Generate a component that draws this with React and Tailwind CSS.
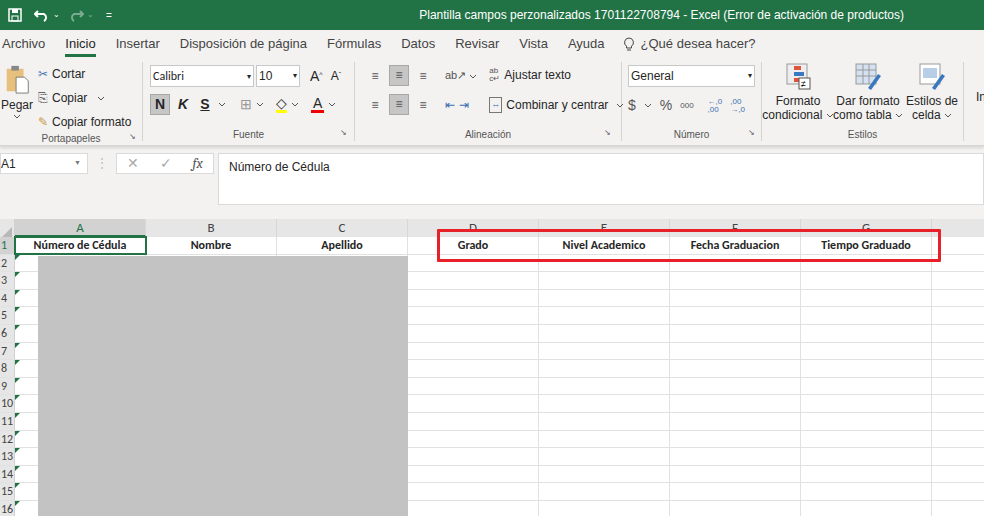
import React from "react";

const F = { fontFamily: '"Liberation Sans",Arial,sans-serif' };
const C = { fontFamily: 'Carlito,"Liberation Sans",sans-serif' };

function Chev() {
  return <svg width="8" height="5" viewBox="0 0 8 5" className="inline-block"><path d="M1 1l3 3 3-3" stroke="#555" fill="none" strokeWidth="1"/></svg>;
}

const cols = ["A", "B", "C", "D", "E", "F", "G", ""];
const row1 = ["Número de Cédula", "Nombre", "Apellido", "Grado", "Nivel Academico", "Fecha Graduacion", "Tiempo Graduado", ""];

export default function App() {
  return (
    <div className="w-[984px] h-[516px] overflow-hidden bg-[#f3f2f1] relative text-[#262626] whitespace-nowrap" style={F}>
      {/* title bar */}
      <div className="h-[30px] bg-[#217346] flex items-center text-white text-[12px] px-[8px]">
        <svg width="14" height="14" viewBox="0 0 14 14"><rect x="1" y="1" width="12" height="12" fill="none" stroke="white" strokeWidth="1.5"/><rect x="4" y="1" width="6" height="4" fill="white"/><rect x="4" y="8" width="6" height="5" fill="none" stroke="white"/></svg>
        <svg className="ml-[12px]" width="16" height="14" viewBox="0 0 16 14"><path d="M4 3 L1 6 L4 9 M1 6 H10 a4 4 0 0 1 0 7" stroke="white" strokeWidth="2" fill="none"/></svg>
        <span className="ml-[3px] text-[8px]">⌄</span>
        <svg className="ml-[8px] opacity-40" width="16" height="14" viewBox="0 0 16 14"><path d="M12 3 L15 6 L12 9 M15 6 H6 a4 4 0 0 0 0 7" stroke="white" strokeWidth="2" fill="none"/></svg>
        <span className="ml-[3px] text-[8px] opacity-40">⌄</span>
        <span className="ml-[12px] text-[10px]">=</span>
        <div className="ml-auto mr-[72px]">Plantilla campos perzonalizados 1701122708794  -  Excel (Error de activación de productos)</div>
      </div>
      {/* tabs */}
      <div className="h-[28px] flex items-center text-[13px] text-[#444]">
        {["Archivo", "Inicio", "Insertar", "Disposición de página", "Fórmulas", "Datos", "Revisar", "Vista", "Ayuda"].map((t) => (
          <div key={t} className="px-[10px] first:pl-[2px] h-full flex items-center relative">
            <span className={t === "Inicio" ? "text-[#262626]" : ""}>{t}</span>
            {t === "Inicio" && <div className="absolute bottom-[1px] left-[10px] right-[10px] h-[3px] bg-[#217346]" />}
          </div>
        ))}
        <div className="px-[8px] flex items-center gap-[6px]">
          <svg width="12" height="15" viewBox="0 0 12 15"><path d="M6 1a4.5 4.5 0 0 0-2.5 8.2V11h5V9.2A4.5 4.5 0 0 0 6 1zM4 13h4" stroke="#444" fill="none"/></svg>
          ¿Qué desea hacer?
        </div>
      </div>
      {/* ribbon */}
      <div className="h-[88px] flex text-[12px] border-b border-[#d6d6d6] shadow-[0_2px_3px_rgba(0,0,0,0.12)]">
        {/* Portapapeles */}
        <div className="w-[143px] shrink-0 border-r border-[#d4d4d4] my-[4px] flex flex-col">
          <div className="flex flex-1">
            <div className="w-[34px] flex flex-col items-center pt-[2px]">
              <svg width="28" height="30" viewBox="0 0 28 32"><rect x="3" y="5" width="18" height="24" rx="1" fill="#e8c07d"/><rect x="8" y="2" width="8" height="5" fill="#888"/><path d="M13 14h9l4 4v13H13z" fill="white" stroke="#777"/></svg>
              <span className="text-[12px] mt-[2px]">Pegar</span>
              <Chev />
            </div>
            <div className="flex flex-col gap-[6px] pt-[3px] text-[12px] ml-[4px]">
              <div className="flex items-center gap-[4px]"><span className="text-[#3a6fb0]">✂</span>Cortar</div>
              <div className="flex items-center gap-[4px]"><span className="text-[#666]">⎘</span>Copiar <span className="ml-[6px]"><Chev /></span></div>
              <div className="flex items-center gap-[4px]"><span className="text-[#c8943c]">✎</span>Copiar formato</div>
            </div>
          </div>
          <div className="text-[10px] text-[#555] text-center h-[14px] relative">Portapapeles<span className="absolute right-[6px] text-[8px]">↘</span></div>
        </div>
        {/* Fuente */}
        <div className="w-[212px] shrink-0 border-r border-[#d4d4d4] my-[4px] flex flex-col px-[7px]">
          <div className="flex items-center gap-[2px] mt-[3px]">
            <div className="w-[104px] h-[22px] bg-white border border-[#c8c8c8] flex items-center px-[2px] justify-between" style={C}>Calibri<span className="text-[8px]">▾</span></div>
            <div className="w-[44px] h-[22px] bg-white border border-[#c8c8c8] flex items-center px-[2px] justify-between">10<span className="text-[8px]">▾</span></div>
            <span className="ml-[8px] text-[14px]">A<sup className="text-[7px]">^</sup></span>
            <span className="ml-[6px] text-[12px]">A<sup className="text-[7px]">ˇ</sup></span>
          </div>
          <div className="flex items-center gap-[4px] mt-[7px] text-[14px]">
            <div className="w-[20px] h-[21px] bg-[#c6c6c6] border border-[#a8a8a8] flex items-center justify-center font-bold">N</div>
            <span className="italic font-bold w-[18px] text-center">K</span>
            <span className="underline font-bold w-[18px] text-center">S</span>
            <Chev />
            <span className="ml-[10px] text-[#999]">⊞</span><Chev />
            <span className="ml-[8px] border-b-[3px] border-[#ffff00] leading-[14px]">◇</span><Chev />
            <span className="ml-[8px] border-b-[3px] border-[#e00] leading-[14px] px-[2px]">A</span><Chev />
          </div>
          <div className="mt-auto text-[10px] text-[#555] text-center h-[14px] relative">Fuente<span className="absolute right-0 text-[8px]">↘</span></div>
        </div>
        {/* Alineacion */}
        <div className="w-[267px] shrink-0 border-r border-[#d4d4d4] my-[4px] flex flex-col px-[10px]">
          <div className="flex gap-[12px] mt-[3px] flex-1">
            <div className="flex flex-col gap-[8px]">
              <div className="flex items-center gap-[4px] text-[#555]">
                <span className="w-[20px] text-center">≡</span>
                <span className="w-[20px] h-[21px] bg-[#c6c6c6] border border-[#a8a8a8] text-center">≡</span>
                <span className="w-[20px] text-center">≡</span>
                <span className="ml-[8px] text-[11px]">ab↗ <Chev /></span>
              </div>
              <div className="flex items-center gap-[4px] text-[#555]">
                <span className="w-[20px] text-center">≡</span>
                <span className="w-[20px] h-[21px] bg-[#c6c6c6] border border-[#a8a8a8] text-center">≡</span>
                <span className="w-[20px] text-center">≡</span>
                <span className="ml-[8px] text-[#3a6fb0]">⇤</span>
                <span className="text-[#3a6fb0]">⇥</span>
              </div>
            </div>
            <div className="flex flex-col gap-[12px] pt-[1px]">
              <div className="flex items-center gap-[4px]"><span className="text-[8px] leading-[8px] text-[#555]">ab<br/>c↵</span>Ajustar texto</div>
              <div className="flex items-center gap-[4px]"><span className="text-[#3a6fb0] border border-[#777] px-[1px] text-[9px]">↔</span>Combinar y centrar <span className="ml-[4px]"><Chev /></span></div>
            </div>
          </div>
          <div className="text-[10px] text-[#555] text-center h-[14px] relative">Alineación<span className="absolute right-0 text-[8px]">↘</span></div>
        </div>
        {/* Numero */}
        <div className="w-[140px] shrink-0 border-r border-[#d4d4d4] my-[4px] flex flex-col px-[6px]">
          <div className="w-[127px] h-[22px] mt-[3px] bg-white border border-[#c8c8c8] flex items-center px-[2px] justify-between">General<span className="text-[8px]">▾</span></div>
          <div className="flex items-center gap-[8px] mt-[8px] text-[#555]">
            <span className="text-[14px]">$</span><Chev /><span className="text-[14px]">%</span><span className="text-[8px]">000</span>
            <span className="text-[8px] leading-[8px] text-[#3a6fb0] ml-[6px]">←,0<br/>,00</span>
            <span className="text-[8px] leading-[8px] text-[#3a6fb0]">,00<br/>→,0</span>
          </div>
          <div className="mt-auto text-[10px] text-[#555] text-center h-[14px] relative">Número<span className="absolute right-0 text-[8px]">↘</span></div>
        </div>
        {/* Estilos */}
        <div className="w-[202px] shrink-0 border-r border-[#d4d4d4] my-[4px] flex flex-col">
          <div className="flex flex-1 text-[12px] leading-[14px] text-center">
            <div className="w-[72px] flex flex-col items-center">
              <svg width="26" height="28" viewBox="0 0 26 28"><rect x="2" y="2" width="20" height="20" fill="#eee" stroke="#999"/><rect x="9" y="4" width="7" height="4" fill="#e0533a"/><rect x="9" y="10" width="10" height="4" fill="#3a78c0"/><rect x="9" y="16" width="5" height="4" fill="#e0533a"/><rect x="14" y="16" width="11" height="11" fill="white" stroke="#555"/><text x="16" y="25" fontSize="9">≠</text></svg>
              <span className="mt-[4px]">Formato<br/>condicional <Chev /></span>
            </div>
            <div className="w-[68px] flex flex-col items-center">
              <svg width="28" height="28" viewBox="0 0 28 28"><rect x="2" y="2" width="20" height="20" fill="#d4e1f0" stroke="#999"/><path d="M2 8h20M2 14h20M9 2v20M15 2v20" stroke="#999"/><path d="M14 26l10-14 3 2-10 14z" fill="#3a78c0"/></svg>
              <span className="mt-[4px]">Dar formato<br/>como tabla <Chev /></span>
            </div>
            <div className="w-[60px] flex flex-col items-center">
              <svg width="28" height="28" viewBox="0 0 28 28"><rect x="2" y="2" width="20" height="20" fill="white" stroke="#999"/><rect x="5" y="6" width="14" height="10" fill="#b8cde6"/><path d="M14 26l10-14 3 2-10 14z" fill="#3a78c0"/></svg>
              <span className="mt-[4px]">Estilos de<br/>celda <Chev /></span>
            </div>
          </div>
          <div className="text-[10px] text-[#555] text-center h-[14px]">Estilos</div>
        </div>
        <div className="pl-[12px] pt-[30px] text-[12px]">In</div>
      </div>
      {/* formula bar */}
      <div className="flex items-start mt-[7px] h-[52px] text-[12px]">
        <div className="w-[88px] h-[21px] bg-white border border-[#dadada] flex items-center justify-between pr-[6px]">A1<span className="text-[7px] text-[#777]">▼</span></div>
        <span className="mx-[8px] text-[#bbb] leading-[21px]">⋮</span>
        <div className="w-[98px] h-[21px] bg-white border border-[#dadada] flex items-center justify-around text-[#aaa] text-[14px]">
          <span>✕</span><span>✓</span><span className="italic text-[#555] font-serif">fx</span>
        </div>
        <div className="ml-[4px] flex-1 h-[52px] bg-white border border-[#dadada] pl-[10px] pt-[4px]">Número de Cédula</div>
      </div>
      {/* grid */}
      <div className="mt-[14px] bg-white" style={C}>
        <div className="flex h-[18px] bg-[#e6e6e6] text-[#444] text-[13px]">
          <div className="w-[15px] shrink-0 border-r border-[#d0d0d0] flex items-end"><svg width="12" height="12" viewBox="0 0 12 12"><path d="M12 2v10H2z" fill="#b8b8b8"/></svg></div>
          {cols.map((c, i) => (
            <div key={i} className={"w-[131px] shrink-0 border-r border-[#d8d8d8] text-center leading-[18px] " + (i === 0 ? "bg-[#d2d2d2] text-[#217346] border-b-2 border-b-[#217346]" : "")}>{c}</div>
          ))}
        </div>
        {Array.from({ length: 16 }).map((_, r) => (
          <div key={r} className="flex h-[17.6px] border-b border-[#e1e1e1]">
            <div className={"w-[15px] shrink-0 text-[12px] leading-[17px] border-r border-[#d0d0d0] overflow-hidden pl-[1px] " + (r === 0 ? "bg-[#d2d2d2] text-[#217346]" : "bg-[#e6e6e6] text-[#444]")}>
              {r + 1}
            </div>
            {row1.map((t, i) => (
              <div key={i} className={"w-[131px] shrink-0 border-r border-[#e1e1e1] text-center font-bold text-[12px] leading-[17px] relative " + (r === 0 && i === 0 ? "outline outline-2 outline-[#217346] -outline-offset-1 z-10" : "")}>
                {r === 0 ? t : ""}
                {r > 0 && i === 0 && <div className="absolute top-0 left-0 w-0 h-0 border-t-[5px] border-t-[#217346] border-r-[5px] border-r-transparent" />}
              </div>
            ))}
          </div>
        ))}
      </div>
      {/* overlays */}
      <div className="absolute left-[38px] top-[256px] w-[370px] h-[260px] bg-[#c3c3c3]" />
      <div className="absolute left-[437px] top-[229px] w-[504px] h-[33px] border-[3px] border-[#e8202a] rounded-[1px]" />
    </div>
  );
}
